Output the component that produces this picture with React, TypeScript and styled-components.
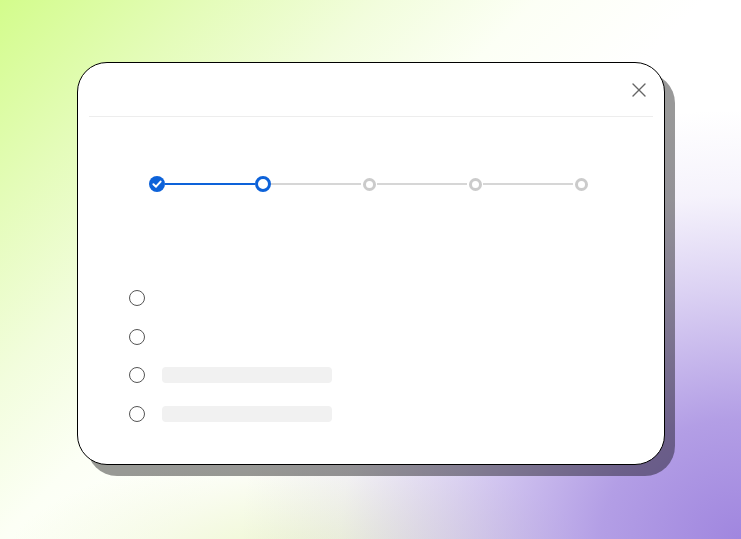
import React from 'react';
import styled, { createGlobalStyle } from 'styled-components';
import { X } from 'lucide-react';

const GlobalStyle = createGlobalStyle`
  html, body {
    margin: 0;
    padding: 0;
    height: 100%;
  }
  body {
    font-family: "Inter", "Liberation Sans", sans-serif;
    overflow: hidden;
  }
`;

const Page = styled.div`
  box-sizing: border-box;
  width: 100vw;
  height: 100vh;
  padding: 62px 0 0 77px;
  background:
    radial-gradient(ellipse 500px 430px at 100% 100%, rgba(160, 134, 223, 1) 0%, rgba(160, 134, 223, 0.8) 28%, rgba(160, 134, 223, 0.38) 58%, rgba(160, 134, 223, 0.1) 80%, rgba(160, 134, 223, 0) 100%),
    radial-gradient(ellipse 300px 120px at 300px 570px, rgba(234, 245, 198, 0.9) 0%, rgba(234, 245, 198, 0) 100%),
    linear-gradient(135deg, #d3fc8c 0%, #e4fcb9 16%, #f2fddd 30%, #fcfff5 42%, #ffffff 55%, #ffffff 100%);
`;

const Card = styled.div`
  box-sizing: border-box;
  width: 588px;
  height: 403px;
  background: #fff;
  border: 1px solid #000;
  border-radius: 30px;
  box-shadow: 10px 11px 0 rgba(0, 0, 0, 0.4);
  display: flex;
  flex-direction: column;
`;

const Header = styled.div`
  height: 53px;
  display: flex;
  align-items: center;
  justify-content: flex-end;
  padding: 0 13px;
`;

const CloseButton = styled.button`
  border: 0;
  padding: 0;
  background: none;
  width: 24px;
  height: 24px;
  display: flex;
  align-items: center;
  justify-content: center;
  color: #666;
  cursor: pointer;
`;

const Divider = styled.div`
  height: 1px;
  margin: 0 11px;
  background: #ededed;
`;

const Stepper = styled.div`
  display: flex;
  align-items: center;
  height: 16px;
  margin: 59px 75px 0 71px;
`;

type NodeState = 'done' | 'current' | 'todo';

const Slot = styled.div`
  flex: none;
  width: 16px;
  height: 16px;
  display: flex;
  align-items: center;
  justify-content: center;
`;

const Node = styled.div<{ $state: NodeState }>`
  box-sizing: border-box;
  flex: none;
  border-radius: 50%;
  display: flex;
  align-items: center;
  justify-content: center;
  width: ${(p) => (p.$state === 'todo' ? '13px' : '16px')};
  height: ${(p) => (p.$state === 'todo' ? '13px' : '16px')};
  background: ${(p) => (p.$state === 'done' ? '#0d62d9' : '#fff')};
  border: ${(p) =>
    p.$state === 'done' ? 'none' : p.$state === 'current' ? '3px solid #0d62d9' : '3px solid #cbcbcb'};
`;

const Line = styled.div<{ $active?: boolean }>`
  flex: 1;
  height: 2px;
  background: ${(p) => (p.$active ? '#0d62d9' : '#d6d6d6')};
`;

const Options = styled.div`
  display: flex;
  flex-direction: column;
  gap: 22.7px;
  margin-top: 98px;
  padding-left: 51px;
`;

const OptionRow = styled.label`
  display: flex;
  align-items: center;
  gap: 17px;
  height: 16px;
`;

const Radio = styled.span`
  box-sizing: border-box;
  width: 16px;
  height: 16px;
  border-radius: 50%;
  border: 1px solid #555;
  flex: none;
`;

const Skeleton = styled.span`
  width: 170px;
  height: 16px;
  border-radius: 4px;
  background: #f1f1f1;
`;

const steps: NodeState[] = ['done', 'current', 'todo', 'todo', 'todo'];
const options = [false, false, true, true];

export default function App() {
  return (
    <>
      <GlobalStyle />
      <Page>
        <Card>
          <Header>
            <CloseButton aria-label="Close">
              <X size={24} strokeWidth={1.4} />
            </CloseButton>
          </Header>
          <Divider />
          <Stepper>
            {steps.map((s, i) => (
              <React.Fragment key={i}>
                {i > 0 && <Line $active={steps[i] !== 'todo'} />}
                <Slot>
                  <Node $state={s}>
                    {s === 'done' && (
                      <svg width="16" height="16" viewBox="0 0 16 16">
                        <path d="M4.4 8.3 L7 10.7 L11.6 5.6" fill="none" stroke="#fff" strokeWidth="2" strokeLinecap="round" strokeLinejoin="round" />
                      </svg>
                    )}
                  </Node>
                </Slot>
              </React.Fragment>
            ))}
          </Stepper>
          <Options>
            {options.map((hasLabel, i) => (
              <OptionRow key={i}>
                <Radio />
                {hasLabel && <Skeleton />}
              </OptionRow>
            ))}
          </Options>
        </Card>
      </Page>
    </>
  );
}
